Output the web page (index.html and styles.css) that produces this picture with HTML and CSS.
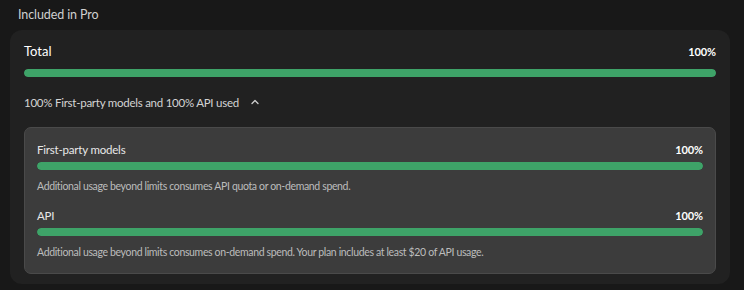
FILE: index.html
```html
<!DOCTYPE html>
<html lang="en">
<head>
    <meta charset="UTF-8">
    <title>Included in Pro</title>
    <link rel="stylesheet" href="styles.css">
</head>
<body>
    <div class="section">
        <div class="section-title">Included in Pro</div>

        <div class="card">
            <div class="usage-head total">
                <span>Total</span>
                <span class="pct">100%</span>
            </div>
            <div class="bar"><div class="fill" style="width: 100%"></div></div>

            <button class="toggle">
                100% First-party models and 100% API used
                <svg width="10" height="10" viewBox="0 0 10 10"><path d="M2 6.5 L5 3.5 L8 6.5" fill="none" stroke="#cfcfcf" stroke-width="1.3" stroke-linecap="round" stroke-linejoin="round"/></svg>
            </button>

            <div class="details">
                <div class="item">
                    <div class="usage-head">
                        <span>First-party models</span>
                        <span class="pct">100%</span>
                    </div>
                    <div class="bar"><div class="fill" style="width: 100%"></div></div>
                    <p class="note">Additional usage beyond limits consumes API quota or on-demand spend.</p>
                </div>
                <div class="item">
                    <div class="usage-head">
                        <span>API</span>
                        <span class="pct">100%</span>
                    </div>
                    <div class="bar"><div class="fill" style="width: 100%"></div></div>
                    <p class="note">Additional usage beyond limits consumes on-demand spend. Your plan includes at least $20 of API usage.</p>
                </div>
            </div>
        </div>
    </div>
</body>
</html>
```

FILE: styles.css
```css
:root {
    --bg-color: #181818;
    --card-color: #212121;
    --inner-color: #3c3c3c;
    --text-color: #e4e4e4;
    --muted-color: #bcbcbc;
    --bar-color: #3ea368;
}

body {
    font-family: 'Lato', sans-serif;
    background-color: var(--bg-color);
    color: var(--text-color);
    margin: 0;
}

.section {
    padding: 5px 14px 0 10px;
}

.section-title {
    font-size: 12.5px;
    letter-spacing: -0.1px;
    color: #d0d0d0;
    padding-left: 8px;
    height: 25px;
    line-height: 20px;
}

.card {
    background: var(--card-color);
    border-radius: 12px;
    padding: 12px 14px 10px 14px;
}

.usage-head {
    display: flex;
    justify-content: space-between;
    align-items: center;
    font-size: 11.5px;
    letter-spacing: -0.2px;
    color: #e8e8e8;
    height: 18px;
}

.usage-head.total {
    font-size: 13px;
    letter-spacing: 0;
    color: #fff;
    height: 18px;
}

.pct {
    font-weight: 700;
    font-size: 11px;
    letter-spacing: -0.1px;
    color: #fff;
}

.bar {
    height: 8px;
    border-radius: 4px;
    background: #2f2f2f;
    margin-top: 9px;
    overflow: hidden;
}

.details .bar {
    margin-top: 4px;
}

.fill {
    height: 100%;
    background: var(--bar-color);
    border-radius: 4px;
}

.toggle {
    display: flex;
    align-items: center;
    gap: 11px;
    background: none;
    border: none;
    padding: 0;
    margin-top: 17px;
    height: 16px;
    font-family: inherit;
    font-size: 11.5px;
    letter-spacing: -0.25px;
    color: #d4d4d4;
}

.details {
    margin-top: 17px;
    background: var(--inner-color);
    border: 1px solid #4a4a4a;
    border-radius: 7px;
    padding: 12px 12px 12px 12px;
}

.item + .item {
    margin-top: 11px;
}

.note {
    margin: 8px 0 0;
    font-size: 10.5px;
    letter-spacing: -0.35px;
    color: var(--muted-color);
    line-height: 17px;
}
```
